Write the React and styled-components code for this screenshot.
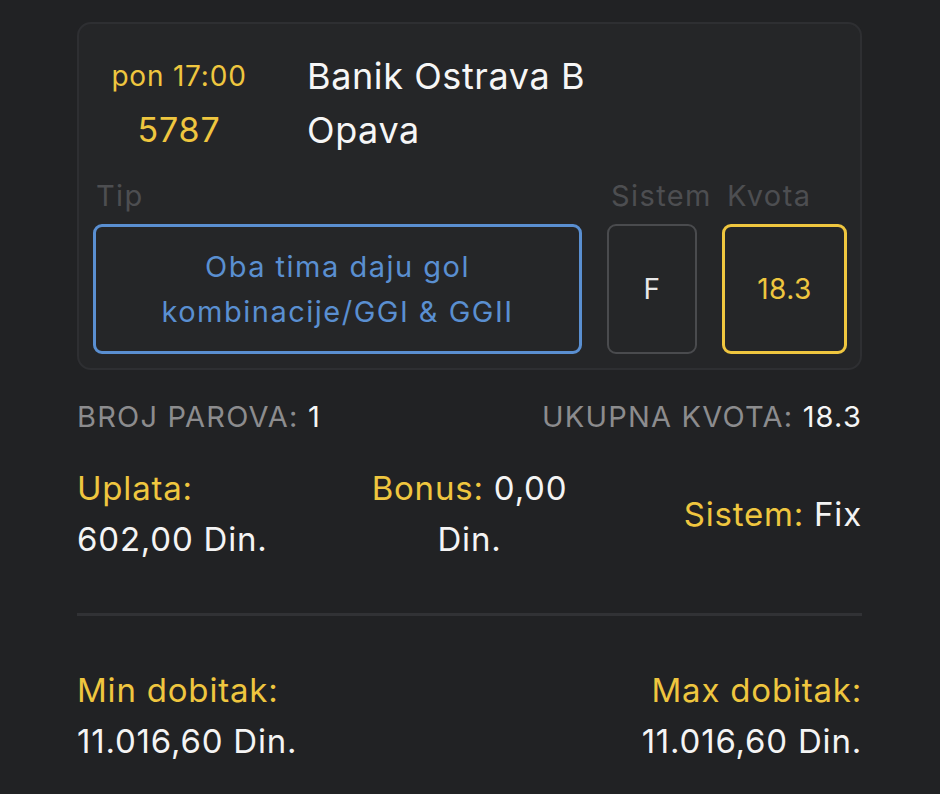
import React from "react";
import styled, { createGlobalStyle } from "styled-components";

const GlobalStyle = createGlobalStyle`
  html, body {
    margin: 0;
    padding: 0;
    background: #212224;
  }
  body {
    font-family: Inter, "Noto Sans", sans-serif;
    color: #f4f4f4;
  }
`;

const YELLOW = "#efc63f";

const Page = styled.div`
  width: 940px;
  min-height: 794px;
  box-sizing: border-box;
  padding: 22px 78px 0 77px;
`;

const Card = styled.div`
  background: #252628;
  border: 2px solid #2e2f32;
  border-radius: 14px;
  padding: 25px 13px 14px 14px;
`;

const MatchRow = styled.div`
  display: grid;
  grid-template-columns: 200px 1fr;
  margin-left: -14px;
  column-gap: 28px;
  align-items: center;
`;

const TimeCell = styled.div`
  text-align: center;
  color: ${YELLOW};
  font-size: ${p => p.size}px;
  line-height: 54px;
  letter-spacing: ${p => p.spacing}px;
`;

const TeamCell = styled.div`
  font-size: 36px;
  line-height: 54px;
  color: #f6f6f6;
  letter-spacing: 0.6px;
`;

const LabelRow = styled.div`
  display: grid;
  grid-template-columns: 1fr 90px 125px;
  column-gap: 25px;
  margin-top: 25px;
  margin-bottom: 14px;
`;

const Label = styled.div`
  color: #4d4e51;
  font-size: 29px;
  line-height: 28px;
  white-space: nowrap;
  letter-spacing: 1.4px;
  padding-left: ${p => p.indent || 3}px;
`;

const BoxRow = styled.div`
  display: grid;
  grid-template-columns: 1fr 90px 125px;
  column-gap: 25px;
  height: 130px;
`;

const Box = styled.div`
  box-sizing: border-box;
  border: ${p => p.thick}px solid ${p => p.border};
  border-radius: 9px;
  display: flex;
  align-items: center;
  justify-content: center;
  text-align: center;
  color: ${p => p.color};
  font-size: ${p => p.size}px;
  line-height: 45px;
  letter-spacing: ${p => p.spacing}px;
`;

const Summary = styled.div`
  display: flex;
  justify-content: space-between;
  margin-top: 30px;
  font-size: 29px;
  line-height: 34px;
  color: #8c8c8e;
  letter-spacing: 1.2px;
`;

const SumValue = styled.span`
  color: #f6f6f6;
`;

const Stakes = styled.div`
  display: grid;
  grid-template-columns: 1fr 1fr 1fr;
  align-items: center;
  margin-top: 29px;
  font-size: 33px;
  line-height: 51px;
  letter-spacing: 0.8px;
`;

const StakeCell = styled.div`
  text-align: ${p => p.align};
`;

const Gold = styled.span`
  color: ${YELLOW};
`;

const Divider = styled.div`
  height: 3px;
  background: #313235;
  margin-top: 48px;
`;

const Winnings = styled.div`
  display: flex;
  justify-content: space-between;
  margin-top: 49px;
  font-size: 33px;
  line-height: 51px;
  letter-spacing: 0.8px;
`;

const WinCell = styled.div`
  text-align: ${p => p.align};
`;

export default function App() {
  return (
    <>
      <GlobalStyle />
      <Page>
        <Card>
          <MatchRow>
            <TimeCell size={28} spacing={0.8}>pon 17:00</TimeCell>
            <TeamCell>Banik Ostrava B</TeamCell>
            <TimeCell size={34} spacing={0.8}>5787</TimeCell>
            <TeamCell>Opava</TeamCell>
          </MatchRow>
          <LabelRow>
            <Label>Tip</Label>
            <Label indent={4}>Sistem</Label>
            <Label indent={5}>Kvota</Label>
          </LabelRow>
          <BoxRow>
            <Box thick={3} border="#5a8fd1" color="#5a8fd1" size={29} spacing={1.5}>
              Oba tima daju gol
              <br />
              kombinacije/GGI &amp; GGII
            </Box>
            <Box thick={2} border="#4a4b4e" color="#e8e8e8" size={28} spacing={0.5}>
              F
            </Box>
            <Box thick={3} border={YELLOW} color={YELLOW} size={28} spacing={0.5}>
              18.3
            </Box>
          </BoxRow>
        </Card>

        <Summary>
          <span>
            BROJ PAROVA: <SumValue>1</SumValue>
          </span>
          <span>
            UKUPNA KVOTA: <SumValue>18.3</SumValue>
          </span>
        </Summary>

        <Stakes>
          <StakeCell align="left">
            <Gold>Uplata:</Gold>
            <br />
            602,00 Din.
          </StakeCell>
          <StakeCell align="center">
            <Gold>Bonus:</Gold> 0,00
            <br />
            Din.
          </StakeCell>
          <StakeCell align="right">
            <Gold>Sistem:</Gold> Fix
          </StakeCell>
        </Stakes>

        <Divider />

        <Winnings>
          <WinCell align="left">
            <Gold>Min dobitak:</Gold>
            <br />
            11.016,60 Din.
          </WinCell>
          <WinCell align="right">
            <Gold>Max dobitak:</Gold>
            <br />
            11.016,60 Din.
          </WinCell>
        </Winnings>
      </Page>
    </>
  );
}
